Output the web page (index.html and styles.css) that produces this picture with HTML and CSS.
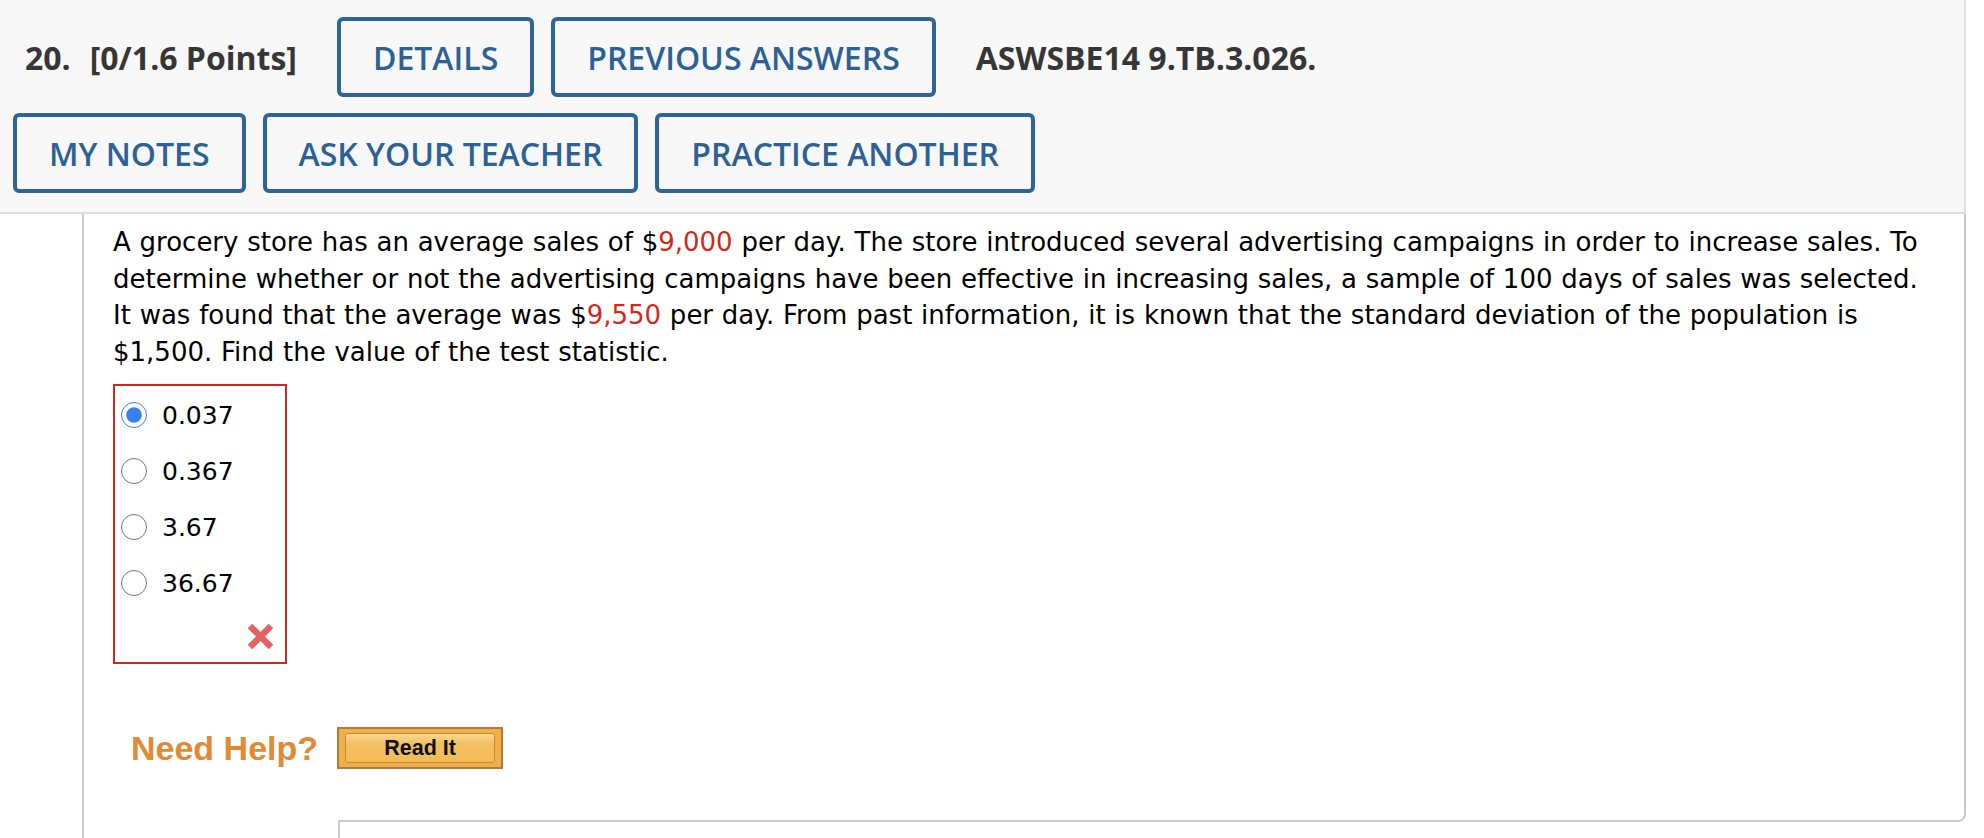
FILE: index.html
```html
<!DOCTYPE html>
<html lang="en">
<head>
    <meta charset="UTF-8">
    <meta name="viewport" content="width=device-width, initial-scale=1.0">
    <title>Question 20 - ASWSBE14 9.TB.3.026</title>
    <link rel="stylesheet" href="styles.css">
</head>
<body>

<div class="question-head">
    <div class="head-row">
        <span class="q-points"><span class="q-num">20.</span>[0/1.6 Points]</span>
        <button class="head-btn">DETAILS</button>
        <button class="head-btn">PREVIOUS ANSWERS</button>
        <span class="q-code">ASWSBE14 9.TB.3.026.</span>
    </div>
    <div class="head-row">
        <button class="head-btn">MY NOTES</button>
        <button class="head-btn">ASK YOUR TEACHER</button>
        <button class="head-btn">PRACTICE ANOTHER</button>
    </div>
</div>

<div class="question-wrap">
    <div class="question-body">
        <p class="q-text">A grocery store has an average sales of $<span class="val">9,000</span> per day. The store introduced several advertising campaigns in order to increase sales. To determine whether or not the advertising campaigns have been effective in increasing sales, a sample of 100 days of sales was selected. It was found that the average was $<span class="val">9,550</span> per day. From past information, it is known that the standard deviation of the population is $1,500. Find the value of the test statistic.</p>

        <div class="answer-box">
            <label class="choice"><input type="radio" name="q20" checked> 0.037</label>
            <label class="choice"><input type="radio" name="q20"> 0.367</label>
            <label class="choice"><input type="radio" name="q20"> 3.67</label>
            <label class="choice"><input type="radio" name="q20"> 36.67</label>
            <div class="mark">
                <svg width="27" height="27" viewBox="0 0 27 27">
                    <path d="M3 3 L24 24 M24 3 L3 24" stroke="#e46262" stroke-width="6.5" fill="none"/>
                </svg>
            </div>
        </div>

        <div class="need-help">
            <span class="help-label">Need Help?</span>
            <button class="read-it"><span>Read It</span></button>
        </div>
    </div>
    <div class="next-box"></div>
</div>

</body>
</html>
```

FILE: styles.css
```css
* {
    margin: 0;
    padding: 0;
    box-sizing: border-box;
}

body {
    font-family: "DejaVu Sans", Verdana, sans-serif;
    color: #000;
    background: #fff;
}

/* Question header */
.question-head {
    width: 1966px;
    background: #f7f7f7;
    border-right: 2px solid #e0e0e0;
    border-bottom: 2px solid #dedede;
    padding: 17px 0 19px 13px;
    display: flex;
    flex-direction: column;
    gap: 16px;
}

.head-row {
    display: flex;
    align-items: center;
    gap: 17px;
}

.q-points,
.q-code {
    font-family: "Open Sans", sans-serif;
    font-weight: 700;
    font-size: 32px;
    color: #363636;
}

.q-points {
    margin: 0 23px 0 12px;
}

.q-num {
    margin-right: 19px;
}

.q-code {
    margin-left: 23px;
}

.head-btn {
    font-family: "Open Sans", sans-serif;
    font-weight: 600;
    font-size: 32px;
    color: #2c6195;
    background: transparent;
    border: 4px solid #2e6497;
    border-radius: 6px;
    padding: 0 32px;
    height: 80px;
    cursor: pointer;
}

/* Question body */
.question-wrap {
    margin-left: 82px;
    width: 1884px;
    border-left: 2px solid #ccc;
}

.question-body {
    position: relative;
    border-right: 2px solid #c8c8c8;
    border-bottom: 2px solid #ccc;
    border-bottom-right-radius: 8px;
    padding: 10px 37px 51px 29px;
}

/* bottom line only starts where the next box begins */
.question-body::after {
    content: "";
    position: absolute;
    left: 0;
    bottom: -2px;
    width: 254px;
    height: 2px;
    background: #fff;
}

.q-text {
    font-size: 26px;
    line-height: 36.5px;
    word-spacing: 0.5px;
}

.val {
    color: #d2281c;
}

.answer-box {
    margin-top: 14px;
    width: 174px;
    border: 2px solid #cc2a20;
    padding: 1px 0 12px 6px;
}

.choice {
    display: flex;
    align-items: center;
    gap: 15px;
    height: 56px;
    font-size: 25px;
}

.choice input {
    width: 26px;
    height: 26px;
    margin: 0;
    accent-color: #3a7ff2;
}

.mark {
    display: flex;
    justify-content: flex-end;
    margin-top: 12px;
    padding-right: 11px;
    height: 27px;
}

/* Need help */
.need-help {
    display: flex;
    align-items: center;
    gap: 19px;
    margin: 63px 0 0 18px;
}

.help-label {
    font-family: "Liberation Sans", Arial, sans-serif;
    font-weight: 700;
    font-size: 34px;
    color: #e08a35;
}

.read-it {
    width: 166px;
    height: 42px;
    border: 2px solid #b4783c;
    background: #efb04a;
    padding: 4px 6px;
    cursor: pointer;
}

.read-it span {
    display: block;
    height: 100%;
    border: 1px solid #c58b3d;
    border-radius: 3px;
    background: linear-gradient(#f8d98e 0%, #f3c063 35%, #f2bb55 100%);
    font-family: "Liberation Sans", Arial, sans-serif;
    font-weight: 700;
    font-size: 21.5px;
    line-height: 28px;
    color: #111;
}

.next-box {
    margin-left: 254px;
    height: 40px;
    border-left: 2px solid #ccc;
}
```
